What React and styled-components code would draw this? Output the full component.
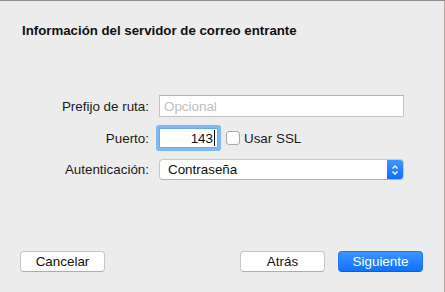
import React from 'react';
import styled, { createGlobalStyle } from 'styled-components';

const GlobalStyle = createGlobalStyle`
  html, body {
    margin: 0;
    padding: 0;
    background: #ececec;
  }
  body {
    font-family: "Liberation Sans", Arial, sans-serif;
    color: #1a1a1a;
  }
`;

const Window = styled.div`
  box-sizing: border-box;
  width: 445px;
  height: 292px;
  background: #ececec;
  border-top: 1px solid #8e8e8e;
  border-right: 1px solid #b3aca8;
  display: flex;
  flex-direction: column;
`;

const Title = styled.h1`
  margin: 0;
  padding: 22px 0 0 22px;
  font-size: 13.25px;
  font-weight: bold;
  line-height: 16px;
  color: #111;
`;

const Form = styled.div`
  display: grid;
  grid-template-columns: 149px 245px;
  column-gap: 10px;
  row-gap: 11px;
  align-items: center;
  margin-top: 56px;
`;

const Label = styled.label`
  text-align: right;
  font-size: 13.4px;
  color: #1a1a1a;
`;

const TextInput = styled.input`
  box-sizing: border-box;
  height: 22px;
  width: 245px;
  border: 1px solid #c4c4c4;
  border-top-color: #b5b5b5;
  background: #fff;
  font-family: "Liberation Sans", Arial, sans-serif;
  font-size: 13.4px;
  padding: 0 4px;
  color: #111;
  outline: none;
  &::placeholder {
    color: #c0c0c0;
  }
`;

const PortRow = styled.div`
  display: flex;
  align-items: center;
  gap: 8px;
`;

const PortField = styled.div`
  box-sizing: border-box;
  width: 59px;
  height: 20px;
  display: flex;
  align-items: center;
  justify-content: flex-end;
  padding-right: 2px;
  background: #fff;
  border: 1px solid #6aa8e8;
  box-shadow: 0 0 0 3px #80b8f1;
  border-radius: 1px;
  font-size: 13.4px;
  color: #111;
`;

const Caret = styled.span`
  width: 1px;
  height: 16px;
  margin-left: 1px;
  background: #000;
`;

const CheckWrap = styled.label`
  display: flex;
  align-items: center;
  gap: 4px;
  font-size: 13.4px;
  color: #1a1a1a;
`;

const CheckBox = styled.span`
  box-sizing: border-box;
  width: 14px;
  height: 14px;
  border: 1px solid #a9a9a9;
  border-radius: 3px;
  background: #fff;
`;

const Select = styled.div`
  box-sizing: border-box;
  width: 245px;
  height: 21px;
  display: flex;
  align-items: stretch;
  border: 1px solid #c8c8c8;
  border-bottom-color: #b0b0b0;
  border-radius: 4px;
  background: #fff;
  overflow: hidden;
`;

const SelectText = styled.span`
  flex: 1;
  font-size: 13.4px;
  line-height: 19px;
  padding-left: 8px;
  color: #111;
`;

const SelectArrow = styled.span`
  width: 16px;
  background: linear-gradient(#3d96ff, #0f6ffb);
  display: flex;
  align-items: center;
  justify-content: center;
`;

const Footer = styled.div`
  margin-top: auto;
  padding: 0 21px 20px 20px;
  display: flex;
  align-items: center;
`;

const Spacer = styled.div`
  flex: 1;
`;

const Button = styled.button`
  box-sizing: border-box;
  width: 85px;
  height: 21px;
  margin-left: ${({ $ml }) => $ml || '0'};
  border-radius: 4px;
  font-family: "Liberation Sans", Arial, sans-serif;
  font-size: 13.4px;
  padding: 0;
  border: 1px solid ${({ $primary }) => ($primary ? '#1f78f2' : '#c6c6c6')};
  border-bottom-color: ${({ $primary }) => ($primary ? '#0c5ed9' : '#aeaeae')};
  background: ${({ $primary }) =>
    $primary ? 'linear-gradient(#3a95ff, #1172fd)' : '#fff'};
  color: ${({ $primary }) => ($primary ? '#fff' : '#111')};
`;

const Arrows = () => (
  <svg width="8" height="12" viewBox="0 0 8 12">
    <path d="M1.5 4.5 L4 2 L6.5 4.5 M1.5 7.5 L4 10 L6.5 7.5" fill="none" stroke="#fff" strokeWidth="1.4" />
  </svg>
);

export default function App() {
  return (
    <>
      <GlobalStyle />
      <Window>
        <Title>Información del servidor de correo entrante</Title>
        <Form>
          <Label>Prefijo de ruta:</Label>
          <TextInput placeholder="Opcional" />
          <Label>Puerto:</Label>
          <PortRow>
            <PortField>
              143
              <Caret />
            </PortField>
            <CheckWrap>
              <CheckBox />
              Usar SSL
            </CheckWrap>
          </PortRow>
          <Label>Autenticación:</Label>
          <Select>
            <SelectText>Contraseña</SelectText>
            <SelectArrow><Arrows /></SelectArrow>
          </Select>
        </Form>
        <Footer>
          <Button>Cancelar</Button>
          <Spacer />
          <Button>Atrás</Button>
          <Button $primary $ml="13px">Siguiente</Button>
        </Footer>
      </Window>
    </>
  );
}
